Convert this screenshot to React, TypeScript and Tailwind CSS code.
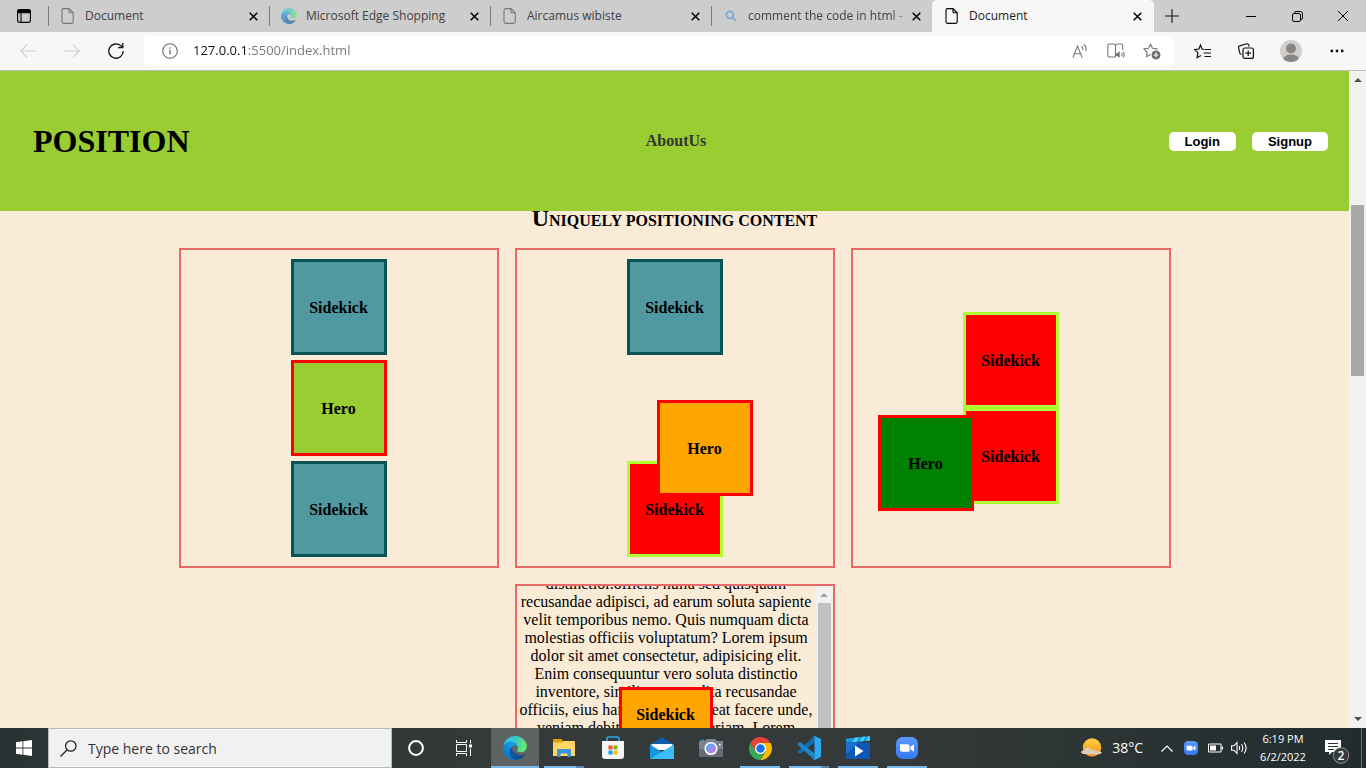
import React from "react";

type KidProps = { children?: React.ReactNode; className?: string };

function CloseGlyph({ className = "size-[9px]" }: { className?: string }) {
  return (
    <svg viewBox="0 0 9 9" className={className} fill="none" stroke="currentColor" strokeWidth="1.5">
      <path d="M.7.7l7.6 7.6M8.3.7L.7 8.3" />
    </svg>
  );
}

function FileIcon({ className = "" }: { className?: string }) {
  return (
    <svg viewBox="0 0 14 16" className={`h-4 w-3.5 ${className}`} fill="none" stroke="currentColor" strokeWidth="1.1">
      <path d="M8 .6H2.6a1.6 1.6 0 0 0-1.6 1.6v11.6a1.6 1.6 0 0 0 1.6 1.6h8a1.6 1.6 0 0 0 1.6-1.6V4.8zM8 .6v3.2a1 1 0 0 0 1 1h3.2" />
    </svg>
  );
}

function EdgeLogo({ id, className }: { id: string; className: string }) {
  return (
    <svg viewBox="4 0 257 259" className={className}>
      <defs>
        <linearGradient id={`${id}a`} x1="63" y1="177" x2="241" y2="177" gradientUnits="userSpaceOnUse">
          <stop offset="0" stopColor="#0c59a4" />
          <stop offset="1" stopColor="#114a8b" />
        </linearGradient>
        <linearGradient id={`${id}b`} x1="157" y1="100" x2="46" y2="221" gradientUnits="userSpaceOnUse">
          <stop offset="0" stopColor="#1b9de2" />
          <stop offset=".4" stopColor="#1595df" />
          <stop offset="1" stopColor="#0078d4" />
        </linearGradient>
        <linearGradient id={`${id}c`} x1="20" y1="60" x2="240" y2="130" gradientUnits="userSpaceOnUse">
          <stop offset="0" stopColor="#35c1f1" />
          <stop offset=".45" stopColor="#36c6c8" />
          <stop offset="1" stopColor="#66eb6e" />
        </linearGradient>
      </defs>
      <path fill={`url(#${id}a)`} d="M235.68 195.46a93.73 93.73 0 0 1-10.54 4.71 101.87 101.87 0 0 1-35.9 6.46c-47.32 0-88.54-32.55-88.54-74.32A31.48 31.48 0 0 1 117.13 105c-42.8 1.8-53.8 46.4-53.8 72.53 0 73.88 68.09 81.37 82.76 81.37 7.91 0 19.84-2.3 27-4.56l1.31-.44a128.34 128.34 0 0 0 66.6-52.8 4 4 0 0 0-5.32-5.64Z" />
      <path fill={`url(#${id}b)`} d="M110.34 246.34A79.2 79.2 0 0 1 87.6 225a80.72 80.72 0 0 1 29.53-120c3.12-1.47 8.45-4.13 15.54-4a32.35 32.35 0 0 1 25.69 13 31.88 31.88 0 0 1 6.36 18.66c0-.21 24.46-79.6-80-79.6-43.9 0-80 41.66-80 78.21a130.15 130.15 0 0 0 12.11 56 128 128 0 0 0 156.38 67.11 75.55 75.55 0 0 1-62.78-8Z" />
      <path fill={`url(#${id}c)`} d="M156.94 153.78c-.81 1.05-3.3 2.5-3.3 5.66 0 2.61 1.7 5.12 4.72 7.23 14.38 10 41.49 8.68 41.56 8.68a59.56 59.56 0 0 0 30.27-8.35 61.38 61.38 0 0 0 30.43-52.88c.26-22.41-8-37.31-11.34-43.91C228.09 28.76 182.35.25 132.61.25a128 128 0 0 0-128 126.2c.48-36.54 36.8-66.05 80-66.05 3.5 0 23.46.34 42 10.07 16.34 8.58 24.9 18.94 30.85 29.21 6.18 10.67 7.28 24.15 7.28 29.52s-2.74 13.33-7.8 19.92Z" />
    </svg>
  );
}

function Tab({ icon, title, fade }: { icon: React.ReactNode; title: string; fade?: boolean }) {
  return (
    <div className="flex w-[221px] items-center text-[#414141]">
      <span className="h-5 w-px bg-[#7d7d7d]" />
      <span className="ml-2.5 flex w-[18px] justify-center">{icon}</span>
      <span
        className={`ml-2 flex-1 overflow-hidden whitespace-nowrap ${
          fade ? "[mask-image:linear-gradient(to_right,black_90%,transparent)]" : ""
        }`}
      >
        {title}
      </span>
      <button aria-label={`Close ${title}`} className="mr-[11px] ml-1 text-black">
        <CloseGlyph />
      </button>
    </div>
  );
}

function TabStrip() {
  return (
    <div className="flex h-8 shrink-0 bg-[#cdcdcd] text-xs">
      <button aria-label="Tab actions menu" className="flex w-12 items-center justify-center">
        <svg viewBox="0 0 14 14" className="size-3.5" fill="none" stroke="#000" strokeWidth="1.1">
          <rect x=".6" y=".6" width="12.8" height="12.8" rx="2.2" />
          <path d="M1 1.2h12v2.6H1z" fill="#000" />
          <path d="M4 4v9.400" />
        </svg>
      </button>
      <Tab icon={<FileIcon className="text-[#777]" />} title="Document" />
      <Tab icon={<EdgeLogo id="tab" className="size-4 opacity-60" />} title="Microsoft Edge Shopping" />
      <Tab icon={<FileIcon className="text-[#777]" />} title="Aircamus wibiste" />
      <Tab
        fade
        icon={
          <svg viewBox="0 0 12 12" className="size-3" fill="none" stroke="#7ba6d2" strokeWidth="1.700">
            <circle cx="4.800" cy="4.800" r="3.500" />
            <path d="M7.500 7.500l3.500 3.500" />
          </svg>
        }
        title="comment the code in html - Search"
      />
      <div className="flex w-[222px] items-center rounded-t-[5px] bg-[#f7f7f7] pl-[11px] text-[#1b1b1b]">
        <span className="flex w-[18px] justify-center">
          <FileIcon className="text-black" />
        </span>
        <span className="ml-2 flex-1">Document</span>
        <button aria-label="Close Document" className="mr-3 text-black">
          <CloseGlyph />
        </button>
      </div>
      <button aria-label="New tab" className="flex w-9 items-center justify-center">
        <svg viewBox="0 0 14 14" className="size-3.5" stroke="#111" strokeWidth="1.100">
          <path d="M7 0v14M0 7h14" />
        </svg>
      </button>
      <div className="ml-auto flex">
        <button aria-label="Minimize" className="flex w-[46px] items-center justify-center">
          <svg viewBox="0 0 10 10" className="size-2.5" stroke="#000"><path d="M0 5.500h10" /></svg>
        </button>
        <button aria-label="Restore" className="flex w-[46px] items-center justify-center">
          <svg viewBox="0 0 11 11" className="size-[11px]" fill="none" stroke="#000">
            <rect x=".5" y="2.500" width="8" height="8" rx="1.500" />
            <path d="M2.500 2.500v-.5A1.500 1.500 0 0 1 4 .5h4.500a2 2 0 0 1 2 2V7A1.500 1.500 0 0 1 9 8.500" />
          </svg>
        </button>
        <button aria-label="Close window" className="flex w-[46px] items-center justify-center">
          <svg viewBox="0 0 10 10" className="size-2.5" stroke="#000"><path d="M0 0l10 10M10 0L0 10" /></svg>
        </button>
      </div>
    </div>
  );
}

function ToolButton({ label, children, className = "w-11" }: KidProps & { label: string }) {
  return (
    <button aria-label={label} className={`flex items-center justify-center ${className}`}>
      {children}
    </button>
  );
}

const STAR = "M7.500 1l2 4.300 4.700.6-3.400 3.300.8 4.600-4.100-2.200-4.100 2.200.8-4.600L.8 5.900l4.700-.6z";

function Toolbar() {
  return (
    <div className="flex h-[39px] shrink-0 items-stretch border-b border-[#bdbdbd] bg-[#f7f7f7] px-1.5">
      <ToolButton label="Back">
        <svg viewBox="0 0 16 14" className="h-3.5 w-4" fill="none" stroke="#cfcfcf" strokeWidth="1.100">
          <path d="M16 7H1M7 .6L.8 7 7 13.400" />
        </svg>
      </ToolButton>
      <ToolButton label="Forward">
        <svg viewBox="0 0 16 14" className="h-3.5 w-4" fill="none" stroke="#cfcfcf" strokeWidth="1.100">
          <path d="M0 7h15M9 .6L15.200 7 9 13.400" />
        </svg>
      </ToolButton>
      <ToolButton label="Refresh">
        <svg viewBox="0 0 16 16" className="size-4" fill="none" stroke="#111" strokeWidth="1.300">
          <path d="M15.200 8A7.200 7.200 0 1 1 12.600 2.500L14.700 4.500M14.800 0v4.700H10" />
        </svg>
      </ToolButton>
      <div className="my-1 ml-1.5 flex flex-1 items-center rounded-[4px] bg-white">
        <button aria-label="View site information" className="ml-[18px]">
          <svg viewBox="0 0 16 16" className="size-4" fill="none" stroke="#6b6b6b" strokeWidth="1.100">
            <circle cx="8" cy="8" r="7.300" />
            <path d="M8 7v4.500M8 4.300v1.400" strokeWidth="1.300" />
          </svg>
        </button>
        <input
          aria-label="Address"
          defaultValue="127.0.0.1:5500/index.html"
          className="ml-[15px] min-w-0 flex-1 bg-[linear-gradient(to_right,#111_54px,#767676_54px)] bg-clip-text text-[13px] text-transparent outline-none"
        />
        <ToolButton label="Read aloud" className="w-9">
          <svg viewBox="0 0 16 14" className="h-3.5 w-4" fill="none" stroke="#777" strokeWidth="1.100">
            <path d="M1 13.500L5.500 2l4.600 11.500M2.400 9.700h6.200M9.500 2.200q2 1.700 1.300 4M11.800.5q3.300 2.500 2 6.700" />
          </svg>
        </ToolButton>
        <ToolButton label="Immersive reader" className="w-9">
          <svg viewBox="0 0 18 16" className="h-4 w-[18px]" fill="none" stroke="#777" strokeWidth="1.100">
            <path d="M8.500 2.300V14M8.500 2.300Q8 1 6.500 1H2Q.8 1 .8 2.200v10.600q0 1.200 1.200 1.200h6.500M8.500 2.300Q9 1 10.500 1h4q1.200 0 1.200 1.200V7M14.500 9.700q1.300 1.800 0 3.700M16.300 8.700q1.800 2.800 0 5.700" />
            <path d="M8.500 10.300h1.600L12.700 8.300v6.800l-2.600-2H8.500z" fill="#777" stroke="none" />
          </svg>
        </ToolButton>
        <ToolButton label="Add to favorites" className="mr-1 w-9">
          <svg viewBox="0 0 18 17" className="h-[17px] w-[18px]" fill="none" stroke="#777" strokeWidth="1.100">
            <path d={STAR} strokeLinejoin="round" />
            <circle cx="13" cy="12" r="5" fill="#6b6b6b" stroke="#fff" />
            <path d="M13 9.500v5M10.500 12h5" stroke="#fff" strokeWidth="1.200" />
          </svg>
        </ToolButton>
      </div>
      <ToolButton label="Favorites" className="ml-1.5 w-11">
        <svg viewBox="0 0 17 15" className="h-[15px] w-[17px]" fill="none" stroke="#111" strokeWidth="1.200">
          <path d="M10 5.500L8 5 6.500.9 5 5l-4.300.6 3.200 3-.8 5.100L7 11.500M10.500 5.500H17M9.500 9H17M10.500 12.500H17" />
        </svg>
      </ToolButton>
      <ToolButton label="Collections">
        <svg viewBox="0 0 16 16" className="size-4" fill="none" stroke="#111" strokeWidth="1.200">
          <rect x="5" y="5" width="10.400" height="10.400" rx="2" />
          <path d="M10.200 7.500v5.500M7.500 10.200H13M3.500 11.500l-.6-.3Q2 10.800 1.700 9.700L.6 4.800Q.3 3.200 1.800 2.800l6.700-2Q10.200.5 10.700 2l.4 1.500" />
        </svg>
      </ToolButton>
      <ToolButton label="Profile" className="w-[46px]">
        <svg viewBox="0 0 22 22" className="size-[22px]">
          <defs><clipPath id="avatar"><circle cx="11" cy="11" r="11" /></clipPath></defs>
          <g clipPath="url(#avatar)">
            <path fill="#d2d0ce" d="M0 0h22v22H0z" />
            <circle cx="11" cy="8.500" r="5" fill="#8a8684" />
            <ellipse cx="11" cy="19.500" rx="8" ry="5" fill="#8a8684" />
          </g>
        </svg>
      </ToolButton>
      <ToolButton label="Settings and more" className="w-[46px]">
        <svg viewBox="0 0 14 4" className="h-1 w-3.5" fill="#111">
          <circle cx="1.800" cy="2" r="1.400" /><circle cx="7" cy="2" r="1.400" /><circle cx="12.200" cy="2" r="1.400" />
        </svg>
      </ToolButton>
    </div>
  );
}

function Tile({ children, className = "" }: KidProps) {
  return (
    <div className={`flex size-24 shrink-0 items-center justify-center border-3 pt-0.5 text-base font-bold ${className}`}>
      {children}
    </div>
  );
}

function Panel({ children, className = "" }: KidProps) {
  return <section className={`size-80 border-2 border-[#e86a6a] ${className}`}>{children}</section>;
}

const LOREM = [
  "distinctior.officiis nulla sed quisquam",
  "recusandae adipisci, ad earum soluta sapiente",
  "velit temporibus nemo. Quis numquam dicta",
  "molestias officiis voluptatum? Lorem ipsum",
  "dolor sit amet consectetur, adipisicing elit.",
  "Enim consequuntur vero soluta distinctio",
  "inventore, similique expedita recusandae",
  "officiis, eius harum dolor placeat facere unde,",
  "veniam debitis voluptas aperiam. Lorem",
  "ipsum dolor sit amet consectetur adipisicing",
];

const TEAL = "border-[#07535a] bg-[#5199a0]";
const RED = "border-[#adff2f] bg-[#ff0000]";

function ArrowGlyph({ down, className = "" }: { down?: boolean; className?: string }) {
  return (
    <svg viewBox="0 0 8 4" className={`h-1 w-2 ${className}`} fill="currentColor">
      <path d={down ? "M0 0h8L4 4z" : "M0 4h8L4 0z"} />
    </svg>
  );
}

function WebPage() {
  return (
    <div className="min-w-0 flex-1 overflow-hidden bg-[#faebd7] font-['Liberation_Serif',serif] text-black">
      <header className="relative z-10 flex h-[140px] items-center justify-between bg-[#9acd32] pr-[21px] pl-[33px]">
        <h1 className="text-[32px] font-bold">POSITION</h1>
        <a href="#about" className="mr-1.5 text-base font-bold text-[#333]">AboutUs</a>
        <div className="flex gap-4 font-['Liberation_Sans',sans-serif] text-[13px] leading-[19px] font-bold">
          <button className="rounded-[5px] bg-white px-4">Login</button>
          <button className="rounded-[5px] bg-white px-4">Signup</button>
        </div>
      </header>
      <h2 className="-mt-[9px] h-[46px] text-center text-base leading-7 font-bold uppercase first-letter:text-2xl">
        Uniquely positioning content
      </h2>
      <div className="mx-auto flex max-w-[992px] flex-wrap justify-center gap-4">
        <Panel className="flex flex-col items-center justify-center gap-[5px]">
          <Tile className={TEAL}>Sidekick</Tile>
          <Tile className="border-[#ff0000] bg-[#9acd32]">Hero</Tile>
          <Tile className={TEAL}>Sidekick</Tile>
        </Panel>
        <Panel className="flex flex-col items-center justify-center gap-[5px]">
          <Tile className={TEAL}>Sidekick</Tile>
          <Tile className="relative top-10 left-[30px] border-[#ff0000] bg-[#ffa500]">Hero</Tile>
          <Tile className={RED}>Sidekick</Tile>
        </Panel>
        <Panel className="relative flex flex-col items-center justify-center">
          <Tile className={RED}>Sidekick</Tile>
          <Tile className="absolute top-[165px] left-[25px] border-[#ff0000] bg-[#008000]">Hero</Tile>
          <Tile className={RED}>Sidekick</Tile>
        </Panel>
        <Panel className="relative flex overflow-hidden">
          <p className="-mt-[11px] min-w-0 flex-1 text-center text-base leading-[18px] whitespace-nowrap">
            {LOREM.map((line) => (
              <span key={line} className="block">{line}</span>
            ))}
          </p>
          <div className="flex w-[17px] flex-col items-center bg-[#f1f1f1] text-[#a3a3a3]">
            <ArrowGlyph className="mt-[7px] mb-1.5 shrink-0" />
            <span className="w-[13px] flex-1 bg-[#c1c1c1]" />
          </div>
          <div className="absolute top-[101px] left-[102px] flex h-[54px] w-[94px] items-center justify-center border-3 border-[#ff0000] bg-[#ffa500] pt-0.5 text-base font-bold">
            Sidekick
          </div>
        </Panel>
      </div>
    </div>
  );
}

function PageScrollbar() {
  return (
    <div className="flex w-[17px] flex-col items-center bg-[#f1f1f1] py-[7px] text-[#505050]">
      <ArrowGlyph className="shrink-0" />
      <div className="flex w-[13px] flex-1 flex-col pb-0.5">
        <span className="flex-[123]" />
        <span className="flex-[171] bg-[#a8a8a8]" />
        <span className="flex-[339]" />
      </div>
      <ArrowGlyph down className="shrink-0" />
    </div>
  );
}

function TaskButton({ label, children, active, open, multi }: KidProps & { label: string; active?: boolean; open?: boolean; multi?: boolean }) {
  return (
    <button aria-label={label} className={`flex h-10 w-12 flex-col items-center ${active ? "bg-[#5e6361]" : ""}`}>
      <span className="flex flex-1 items-center justify-center pt-0.5">{children}</span>
      <span className={`flex h-0.5 ${active ? "w-12" : "w-10"}`}>
        {(open || active) && <span className="flex-1 bg-[#76b9ed]" />}
        {multi && <span className="w-2 bg-[#5a86ae]" />}
      </span>
    </button>
  );
}

function Camcorder({ id, className }: { id: string; className: string }) {
  return (
    <svg viewBox="0 0 22 22" className={className}>
      <defs>
        <linearGradient id={id} x1="0" y1="0" x2="0" y2="1">
          <stop offset="0" stopColor="#5a9bff" /><stop offset="1" stopColor="#3478f6" />
        </linearGradient>
      </defs>
      <rect width="22" height="22" rx="6.500" fill={`url(#${id})`} />
      <path fill="#fff" d="M4 7.300h7.500a2 2 0 0 1 2 2v5.500H6a2 2 0 0 1-2-2zM14.300 9.800L18 7.300v7.500l-3.700-2.500z" />
    </svg>
  );
}

function Taskbar() {
  return (
    <footer className="flex h-10 shrink-0 bg-[linear-gradient(to_right,#2a3333,#343a39_35%,#343a39_65%,#222c2e)] text-white">
      <button aria-label="Start" className="flex w-12 items-center justify-center">
        <svg viewBox="0 0 16 16" className="size-4" fill="#fff">
          <path d="M0 2.200l6.500-.9v6.300H0zM7.300 1.200L16 0v7.600H7.300zM0 8.400h6.500v6.300L0 13.800zM7.300 8.400H16V16l-8.700-1.200z" />
        </svg>
      </button>
      <label className="flex w-[344px] items-center border border-[#b9b9b9] bg-[#f1f1f1] pl-[11px] text-[#333]">
        <svg viewBox="0 0 17 17" className="size-[17px]" fill="none" stroke="#222" strokeWidth="1.300">
          <circle cx="10.800" cy="6" r="5.200" /><path d="M7.200 9.800L.5 16.500" />
        </svg>
        <input
          aria-label="Search"
          placeholder="Type here to search"
          className="ml-[11px] min-w-0 flex-1 bg-transparent pt-0.5 text-sm outline-none placeholder:text-[#333]"
        />
      </label>
      <TaskButton label="Cortana">
        <svg viewBox="0 0 16 16" className="size-4" fill="none" stroke="#fff" strokeWidth="2"><circle cx="8" cy="8" r="6.900" /></svg>
      </TaskButton>
      <TaskButton label="Task view">
        <svg viewBox="0 0 16 16" className="size-4" fill="none" stroke="#fff">
          <path d="M.5 0v2.500h10V0M.5 16v-2.500h10V16M.5 4.500h10v7H.5zM14.500 0v3.500M14.500 8.500V16" />
          <path d="M13 4.500h3v3h-3z" fill="#fff" stroke="none" />
        </svg>
      </TaskButton>
      <nav aria-label="Apps" className="ml-[3px] flex gap-px">
        <TaskButton label="Microsoft Edge" active><EdgeLogo id="task" className="size-6" /></TaskButton>
        <TaskButton label="File Explorer" open multi>
          <svg viewBox="0 0 22 18" className="h-[18px] w-[22px]">
            <path fill="#e0a100" d="M0 1q0-1 1-1h7.500l1.500 2v3H0z" />
            <path fill="#ffd566" d="M0 3.500h9L10.500 2H21q1 0 1 1v14H0z" />
            <path fill="#3a94d9" d="M4 18v-7q0-1 1-1h12q1 0 1 1v7h-3.500v-3.500h-7V18z" />
          </svg>
        </TaskButton>
        <TaskButton label="Microsoft Store">
          <svg viewBox="0 0 24 24" className="size-6">
            <path fill="none" stroke="#2aa9e8" strokeWidth="1.600" d="M6 6V3q0-2 2-2h8q2 0 2 2v3" />
            <path fill="#f5f5f5" d="M1 5h22v15q0 3-3 3H4q-3 0-3-3z" />
            <path fill="#f25022" d="M7.500 9.500h4v4h-4z" /><path fill="#7fba00" d="M12.500 9.500h4v4h-4z" />
            <path fill="#00a4ef" d="M7.500 14.500h4v4h-4z" /><path fill="#ffb900" d="M12.500 14.500h4v4h-4z" />
          </svg>
        </TaskButton>
        <TaskButton label="Mail">
          <svg viewBox="0 0 24 22" className="h-[22px] w-6">
            <path fill="#0f5ba7" d="M0 7.500L12 0l12 7.500V10H0z" />
            <path fill="#fff" d="M1.500 7h21v6h-21z" />
            <path fill="#1595dd" d="M0 7.500l12 7.500L24 22H0z" />
            <path fill="#39bdf2" d="M24 7.500L0 22h24z" />
          </svg>
        </TaskButton>
        <TaskButton label="Camera">
          <svg viewBox="0 0 24 18" className="h-[18px] w-6">
            <defs>
              <linearGradient id="lens" x1="0" y1="0" x2="1" y2="1"><stop stopColor="#31b5f3" /><stop offset=".6" stopColor="#a78be8" /><stop offset="1" stopColor="#d46fe0" /></linearGradient>
            </defs>
            <path fill="#189de0" d="M1 2.500L2 .8h3l1 1.700z" />
            <path fill="#7b838c" d="M0 3q0-1 1-1h5l2-2h8l2 2h5q1 0 1 1v14q0 1-1 1H1q-1 0-1-1z" />
            <path fill="#656c75" d="M0 10h24v7q0 1-1 1H1q-1 0-1-1z" />
            <circle cx="12" cy="9.500" r="6.600" fill="#fff" /><circle cx="12" cy="9.500" r="5" fill="url(#lens)" />
            <path fill="#fff" d="M20 5h1.500v1.500H20z" />
          </svg>
        </TaskButton>
        <TaskButton label="Google Chrome" open>
          <svg viewBox="0 0 48 48" className="size-[23px]">
            <path fill="#34a853" d="M24 48A24 24 0 0 1 3.200 12L14.500 29.500 24 24l9.500 5.500z" />
            <path fill="#ea4335" d="M3.200 12L13.600 30 24 24V12.500h20.800A24 24 0 0 0 3.200 12z" />
            <path fill="#fbbc04" d="M24 48l10.400-18L24 24V12.500h21A24 24 0 0 1 24 48z" />
            <circle cx="24" cy="24" r="11.500" fill="#fff" /><circle cx="24" cy="24" r="8.800" fill="#1a73e8" />
          </svg>
        </TaskButton>
        <TaskButton label="Visual Studio Code" open multi>
          <svg viewBox="0 0 24 24" className="size-6">
            <path fill="#0f6fb5" d="M17.500 6.500L3.200 17.900 1 16.800q-1-.7 0-1.700L17.500 0z" />
            <path fill="#1a86d0" d="M17.500 17.500L3.200 6.100 1 7.200Q0 7.900 1 8.900L17.500 24z" />
            <path fill="#2fa8f2" d="M17.500 0L23 2.600q1 .4 1 1.400v16q0 1-1 1.400L17.500 24q-1 0-1.300-.8Q17.500 23.500 17.500 22V2q0-1.500-1.300-1.200.3-.8 1.300-.8z" />
          </svg>
        </TaskButton>
        <TaskButton label="Movies & TV" open>
          <svg viewBox="0 0 24 24" className="size-6">
            <path fill="#1a9ae0" d="M0 2.800L23.500 0l.5 4.500L0 7z" />
            <path fill="#45d2fa" d="M9 1.700l4-.5-2.500 4.700-4 .4zM16 .9l3.500-.4-2.500 4.700-3.500.4zM22 .3l1.500-.3.5 4.500-4 .4z" />
            <path fill="#0d57b5" d="M0 6.500h24V22q0 1-1 1H1q-1 0-1-1z" />
            <path fill="#1d6fd3" d="M0 6.500h13L0 18z" />
            <path fill="#fff" d="M9 9.500l8.500 5.500L9 20.500z" />
          </svg>
        </TaskButton>
        <TaskButton label="Zoom" open><Camcorder id="zoomLarge" className="size-[22px]" /></TaskButton>
      </nav>
      <div className="ml-auto flex items-center">
        <button className="flex items-center gap-2.5 text-sm">
          <svg viewBox="0 0 21 20" className="h-5 w-[21px]">
            <defs><linearGradient id="sun" x1="0" y1="0" x2="0" y2="1"><stop stopColor="#ffd23e" /><stop offset="1" stopColor="#f58a1f" /></linearGradient></defs>
            <circle cx="11" cy="9.500" r="9.300" fill="url(#sun)" />
            <path fill="#dfcdb8" d="M2.500 16q-2.500-.3-2.500-2 .2-1.700 3-1.800 1-3 4-2.700 2.500.3 3.500 2.200 2.500-.7 3.500 1 5 .3 7 1.800-1 2-7 2z" />
          </svg>
          38°C
        </button>
        <button aria-label="Show hidden icons" className="ml-[18px]">
          <svg viewBox="0 0 12 7" className="h-[7px] w-3" fill="none" stroke="#fff" strokeWidth="1.200"><path d="M.5 6.500L6 1l5.500 5.500" /></svg>
        </button>
        <button aria-label="Zoom meeting" className="ml-[11px]"><Camcorder id="zoomSmall" className="size-3.5" /></button>
        <button aria-label="Battery" className="ml-2.5">
          <svg viewBox="0 0 15 10" className="h-2.5 w-[15px]" fill="none" stroke="#fff">
            <path d="M.5 1h12.500v8H.5z" /><path d="M2 2.500h6v5H2zM13.500 3.500H15v3h-1.500z" fill="#fff" stroke="none" />
          </svg>
        </button>
        <button aria-label="Volume" className="ml-2">
          <svg viewBox="0 0 17 14" className="h-3.5 w-[17px]" fill="none" stroke="#fff" strokeWidth="1.100">
            <path d="M.6 4.800h2.200L6 1.500v11L2.800 9.200H.6zM8 5q1.300 2 0 4M10.500 3.300q2.600 3.700 0 7.400M13 1.500q4.300 5.500 0 11" />
          </svg>
        </button>
        <button className="ml-2.5 w-[50px] text-center text-[11px] leading-[18px] whitespace-nowrap">
          6:19 PM<br />6/2/2022
        </button>
        <button aria-label="Notifications" className="mr-[11px] ml-[17px] flex w-[25px] pt-1.5">
          <svg viewBox="0 0 25 26" className="h-[26px] w-[25px]">
            <path fill="#fff" d="M0 2h16v12H7l-3 3v-3H0z" />
            <path stroke="#26302f" d="M3 5.500h10M3 8.500h10M3 11.500h6" />
            <circle cx="16" cy="17.500" r="7.800" fill="#343b3b" stroke="#8c9191" />
            <text x="16" y="22" textAnchor="middle" fontSize="12" fontWeight="600" fill="#fff">2</text>
          </svg>
        </button>
        <span className="mr-1 h-10 w-px bg-[#6b7374]" />
      </div>
    </footer>
  );
}

export default function App() {
  return (
    <div className="flex h-screen flex-col overflow-hidden font-['Open_Sans','Noto_Sans',sans-serif]">
      <TabStrip />
      <Toolbar />
      <main className="flex min-h-0 flex-1">
        <WebPage />
        <PageScrollbar />
      </main>
      <Taskbar />
    </div>
  );
}
